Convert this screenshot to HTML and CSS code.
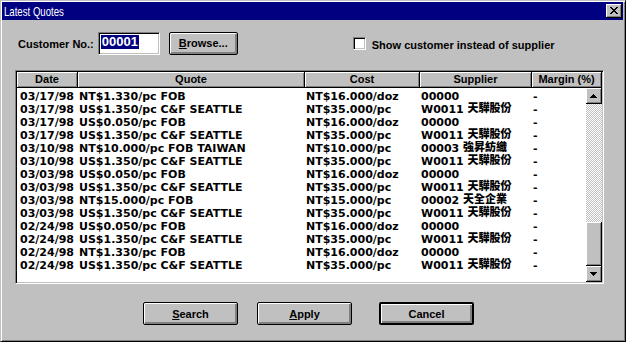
FILE: index.html
```html
<!DOCTYPE html>
<html lang="en">

<head>
    <meta charset="UTF-8">
    <title>Latest Quotes</title>
    <link rel="stylesheet" href="styles.css">
</head>

<body>

    <div class="window">
        <div class="titlebar">
            <span class="title">Latest Quotes</span>
            <span class="close-btn">
                <svg width="8" height="7" viewBox="0 0 8 7"><path d="M0 0h2v1H0zM6 0h2v1H6zM1 1h2v1H1zM5 1h2v1H5zM2 2h4v1H2zM3 3h2v1H3zM2 4h4v1H2zM1 5h2v1H1zM5 5h2v1H5zM0 6h2v1H0zM6 6h2v1H6z" fill="#000"/></svg>
            </span>
        </div>

        <div class="top-row">
            <span class="field-label">Customer No.:</span>
            <div class="textbox"><span class="selected">00001</span></div>
            <div class="btn browse"><u>B</u>rowse...</div>
            <span class="checkbox"></span>
            <span class="check-label">Show customer instead of supplier</span>
        </div>

        <div class="listview">
            <div class="lv-head">
                <div class="hcell col-date">Date</div>
                <div class="hcell col-quote">Quote</div>
                <div class="hcell col-cost">Cost</div>
                <div class="hcell col-supplier">Supplier</div>
                <div class="hcell col-margin">Margin (%)</div>
            </div>
            <div class="lv-body">
                <div class="rows">
                    <div class="row"><span class="col-date">03/17/98</span><span class="col-quote">NT$1.330/pc FOB</span><span class="col-cost">NT$16.000/doz</span><span class="col-supplier">00000</span><span class="col-margin">-</span></div>
                    <div class="row"><span class="col-date">03/17/98</span><span class="col-quote">US$1.350/pc C&amp;F SEATTLE</span><span class="col-cost">NT$35.000/pc</span><span class="col-supplier">W0011 <b class="cjk">天驊股份</b></span><span class="col-margin">-</span></div>
                    <div class="row"><span class="col-date">03/17/98</span><span class="col-quote">US$0.050/pc FOB</span><span class="col-cost">NT$16.000/doz</span><span class="col-supplier">00000</span><span class="col-margin">-</span></div>
                    <div class="row"><span class="col-date">03/17/98</span><span class="col-quote">US$1.350/pc C&amp;F SEATTLE</span><span class="col-cost">NT$35.000/pc</span><span class="col-supplier">W0011 <b class="cjk">天驊股份</b></span><span class="col-margin">-</span></div>
                    <div class="row"><span class="col-date">03/10/98</span><span class="col-quote">NT$10.000/pc FOB TAIWAN</span><span class="col-cost">NT$10.000/pc</span><span class="col-supplier">00003 <b class="cjk">強昇紡織</b></span><span class="col-margin">-</span></div>
                    <div class="row"><span class="col-date">03/10/98</span><span class="col-quote">US$1.350/pc C&amp;F SEATTLE</span><span class="col-cost">NT$35.000/pc</span><span class="col-supplier">W0011 <b class="cjk">天驊股份</b></span><span class="col-margin">-</span></div>
                    <div class="row"><span class="col-date">03/03/98</span><span class="col-quote">US$0.050/pc FOB</span><span class="col-cost">NT$16.000/doz</span><span class="col-supplier">00000</span><span class="col-margin">-</span></div>
                    <div class="row"><span class="col-date">03/03/98</span><span class="col-quote">US$1.350/pc C&amp;F SEATTLE</span><span class="col-cost">NT$35.000/pc</span><span class="col-supplier">W0011 <b class="cjk">天驊股份</b></span><span class="col-margin">-</span></div>
                    <div class="row"><span class="col-date">03/03/98</span><span class="col-quote">NT$15.000/pc FOB</span><span class="col-cost">NT$15.000/pc</span><span class="col-supplier">00002 <b class="cjk">天全企業</b></span><span class="col-margin">-</span></div>
                    <div class="row"><span class="col-date">03/03/98</span><span class="col-quote">US$1.350/pc C&amp;F SEATTLE</span><span class="col-cost">NT$35.000/pc</span><span class="col-supplier">W0011 <b class="cjk">天驊股份</b></span><span class="col-margin">-</span></div>
                    <div class="row"><span class="col-date">02/24/98</span><span class="col-quote">US$0.050/pc FOB</span><span class="col-cost">NT$16.000/doz</span><span class="col-supplier">00000</span><span class="col-margin">-</span></div>
                    <div class="row"><span class="col-date">02/24/98</span><span class="col-quote">US$1.350/pc C&amp;F SEATTLE</span><span class="col-cost">NT$35.000/pc</span><span class="col-supplier">W0011 <b class="cjk">天驊股份</b></span><span class="col-margin">-</span></div>
                    <div class="row"><span class="col-date">02/24/98</span><span class="col-quote">NT$1.330/pc FOB</span><span class="col-cost">NT$16.000/doz</span><span class="col-supplier">00000</span><span class="col-margin">-</span></div>
                    <div class="row"><span class="col-date">02/24/98</span><span class="col-quote">US$1.350/pc C&amp;F SEATTLE</span><span class="col-cost">NT$35.000/pc</span><span class="col-supplier">W0011 <b class="cjk">天驊股份</b></span><span class="col-margin">-</span></div>
                </div>
                <div class="scrollbar">
                    <div class="sb-btn">
                        <svg width="7" height="4" viewBox="0 0 7 4"><path d="M3 0h1v1H3zM2 1h3v1H2zM1 2h5v1H1zM0 3h7v1H0z" fill="#000"/></svg>
                    </div>
                    <div class="sb-track"></div>
                    <div class="sb-thumb"></div>
                    <div class="sb-btn">
                        <svg width="7" height="4" viewBox="0 0 7 4"><path d="M0 0h7v1H0zM1 1h5v1H1zM2 2h3v1H2zM3 3h1v1H3z" fill="#000"/></svg>
                    </div>
                </div>
            </div>
        </div>

        <div class="bottom-row">
            <div class="btn action search"><u>S</u>earch</div>
            <div class="btn action apply"><u>A</u>pply</div>
            <div class="btn action cancel default">Cancel</div>
        </div>
    </div>

</body>

</html>
```

FILE: styles.css
```css
body {
    margin: 0;
    background: #c0c0c0;
    font-family: 'Liberation Sans', Arial, sans-serif;
    font-size: 11px;
    font-weight: bold;
    color: #000;
}

/* window frame */
.window {
    width: 626px;
    height: 342px;
    box-sizing: border-box;
    background: #c0c0c0;
    border: 1px solid;
    border-color: #c0c0c0 #000 #000 #c0c0c0;
    box-shadow: inset 1px 1px #fff, inset -1px -1px #808080;
    padding: 1px 2px 2px 1px;
}

.titlebar {
    height: 18px;
    background: #000080;
    display: flex;
    align-items: center;
    justify-content: space-between;
    padding-left: 2px;
}

.title {
    display: inline-block;
    color: #fff;
    font-weight: normal;
    font-size: 13px;
    transform: scaleX(0.74);
    transform-origin: left center;
}

.close-btn {
    width: 16px;
    height: 14px;
    box-sizing: border-box;
    margin-right: 1px;
    background: #c0c0c0;
    box-shadow: inset -1px -1px #000, inset 1px 1px #fff, inset -2px -2px #808080;
    display: flex;
    align-items: center;
    justify-content: center;
    padding: 0 1px 1px 0;
}

/* first row */
.top-row {
    display: flex;
    align-items: center;
    height: 23px;
    margin-top: 12px;
    padding-left: 16px;
}

.field-label {
    margin-right: 4px;
}

.textbox {
    width: 62px;
    height: 23px;
    box-sizing: border-box;
    background: #fff;
    border: 1px solid;
    border-color: #808080 #fff #fff #808080;
    box-shadow: inset 1px 1px #000, inset -1px -1px #c0c0c0;
    padding: 2px 0 0 2px;
}

.selected {
    display: inline-block;
    background: #000080;
    color: #fff;
    font-size: 13px;
    line-height: 14px;
    padding: 0 1px;
}

.btn {
    box-sizing: border-box;
    background: #c0c0c0;
    border: 1px solid #000;
    border-radius: 2px;
    box-shadow: inset 1px 1px #fff, inset -1px -1px #808080, inset -2px -2px #808080;
    display: flex;
    align-items: center;
    justify-content: center;
    font-size: 11px;
}

.browse {
    width: 69px;
    height: 23px;
    margin-left: 9px;
    padding-bottom: 1px;
}

.checkbox {
    width: 13px;
    height: 13px;
    box-sizing: border-box;
    margin-left: 115px;
    background: #fff;
    border: 1px solid;
    border-color: #808080 #fff #fff #808080;
    box-shadow: inset 1px 1px #000, inset -1px -1px #c0c0c0;
}

.check-label {
    margin-left: 6px;
    margin-top: 2px;
}

/* list view */
.listview {
    width: 589px;
    height: 214px;
    box-sizing: border-box;
    margin: 15px 0 0 13px;
    border: 1px solid;
    border-color: #808080 #fff #fff #808080;
    box-shadow: inset 1px 1px #000, inset -1px -1px #c0c0c0;
    padding: 1px;
    display: flex;
    flex-direction: column;
}

.lv-head {
    display: flex;
    height: 16px;
}

.hcell {
    box-sizing: border-box;
    height: 16px;
    line-height: 15px;
    text-align: center;
    background: #c0c0c0;
    border-right: 1px solid #000;
    border-bottom: 1px solid #000;
    box-shadow: inset 1px 1px #fff, inset -1px -1px #808080;
}

.col-date { width: 61px; }
.col-quote { width: 227px; }
.col-cost { width: 115px; }
.col-supplier { width: 112px; }
.col-margin { flex: 1; }

.lv-body {
    flex: 1;
    display: flex;
    background: #fff;
}

.rows {
    flex: 1;
    padding-top: 2px;
    font-family: 'DejaVu Sans', sans-serif;
    font-size: 11px;
}

.row {
    display: flex;
    height: 13px;
    line-height: 13px;
    white-space: nowrap;
}

.row span {
    box-sizing: border-box;
    padding-left: 1px;
    height: 13px;
}

.row .col-date {
    padding-left: 3px;
}

.cjk {
    line-height: 6px;
    vertical-align: 1px;
    font-family: 'Noto Sans CJK TC', sans-serif;
    font-size: 11px;
    font-weight: 900;
}

/* scrollbar */
.scrollbar {
    width: 16px;
    display: flex;
    flex-direction: column;
}

.sb-btn {
    height: 16px;
    box-sizing: border-box;
    background: #c0c0c0;
    box-shadow: inset -1px -1px #000, inset 1px 1px #fff, inset -2px -2px #808080;
    display: flex;
    align-items: center;
    justify-content: center;
    padding: 0 1px 1px 0;
}

.sb-track {
    flex: 1;
    background: repeating-conic-gradient(#c0c0c0 0 25%, #fff 0 50%) 0 0 / 2px 2px;
}

.sb-thumb {
    height: 44px;
    background: #c0c0c0;
    box-shadow: inset -1px -1px #000, inset 1px 1px #fff, inset -2px -2px #808080;
}

/* bottom buttons */
.bottom-row {
    display: flex;
    margin-top: 18px;
    padding-left: 141px;
}

.action {
    width: 95px;
    height: 23px;
}

.apply {
    margin-left: 19px;
}

.cancel {
    margin-left: 27px;
}

.default {
    border-width: 2px;
}
```
